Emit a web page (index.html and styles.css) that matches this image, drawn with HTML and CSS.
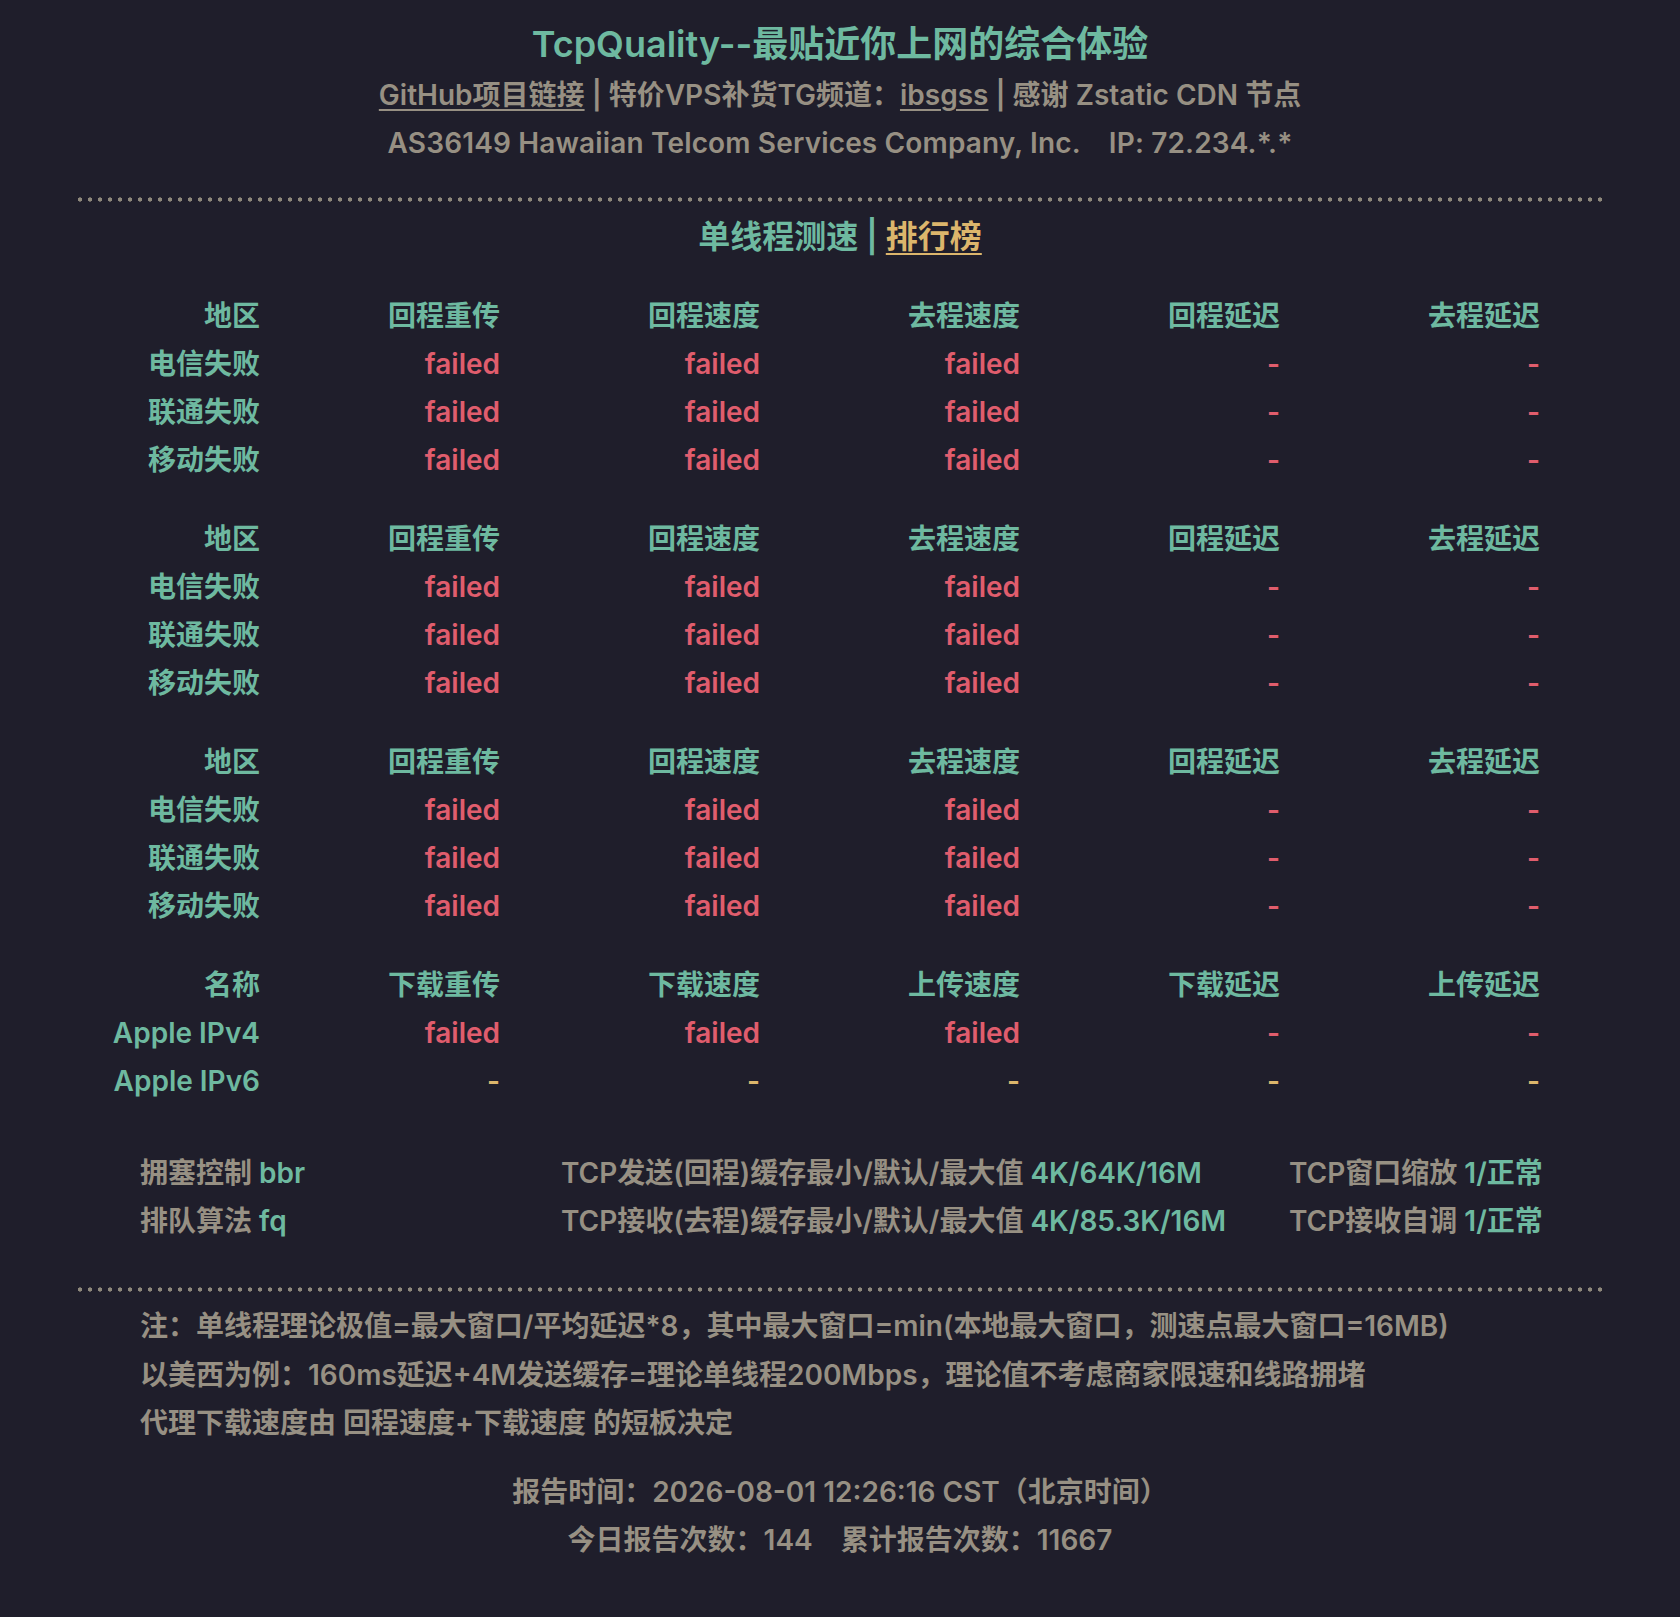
FILE: index.html
```html
<!DOCTYPE html>
<html lang="zh-CN">
<head>
<meta charset="utf-8">
<title>TcpQuality</title>
<link rel="stylesheet" href="styles.css">
</head>
<body>
<div class="wrap">
  <header class="head">
    <h1 class="title">TcpQuality--最贴近你上网的综合体验</h1>
    <p class="links"><a class="ul" href="#">GitHub项目链接</a> | 特价VPS补货TG频道：<a class="ul" href="#">ibsgss</a> | 感谢 Zstatic CDN 节点</p>
    <p class="asn">AS36149 Hawaiian Telcom Services Company, Inc.<span class="gap"></span>IP: 72.234.*.*</p>
  </header>

  <div class="dots"></div>

  <h2 class="section">单线程测速 <span class="bar">|</span> <a class="rank" href="#">排行榜</a></h2>

  <div class="tables">
    <div class="grid">
      <div class="th">地区</div><div class="th">回程重传</div><div class="th">回程速度</div><div class="th">去程速度</div><div class="th">回程延迟</div><div class="th">去程延迟</div>
      <div class="name">电信失败</div><div class="bad">failed</div><div class="bad">failed</div><div class="bad">failed</div><div class="bad">-</div><div class="bad">-</div>
      <div class="name">联通失败</div><div class="bad">failed</div><div class="bad">failed</div><div class="bad">failed</div><div class="bad">-</div><div class="bad">-</div>
      <div class="name">移动失败</div><div class="bad">failed</div><div class="bad">failed</div><div class="bad">failed</div><div class="bad">-</div><div class="bad">-</div>
    </div>
    <div class="grid">
      <div class="th">地区</div><div class="th">回程重传</div><div class="th">回程速度</div><div class="th">去程速度</div><div class="th">回程延迟</div><div class="th">去程延迟</div>
      <div class="name">电信失败</div><div class="bad">failed</div><div class="bad">failed</div><div class="bad">failed</div><div class="bad">-</div><div class="bad">-</div>
      <div class="name">联通失败</div><div class="bad">failed</div><div class="bad">failed</div><div class="bad">failed</div><div class="bad">-</div><div class="bad">-</div>
      <div class="name">移动失败</div><div class="bad">failed</div><div class="bad">failed</div><div class="bad">failed</div><div class="bad">-</div><div class="bad">-</div>
    </div>
    <div class="grid">
      <div class="th">地区</div><div class="th">回程重传</div><div class="th">回程速度</div><div class="th">去程速度</div><div class="th">回程延迟</div><div class="th">去程延迟</div>
      <div class="name">电信失败</div><div class="bad">failed</div><div class="bad">failed</div><div class="bad">failed</div><div class="bad">-</div><div class="bad">-</div>
      <div class="name">联通失败</div><div class="bad">failed</div><div class="bad">failed</div><div class="bad">failed</div><div class="bad">-</div><div class="bad">-</div>
      <div class="name">移动失败</div><div class="bad">failed</div><div class="bad">failed</div><div class="bad">failed</div><div class="bad">-</div><div class="bad">-</div>
    </div>
    <div class="grid">
      <div class="th">名称</div><div class="th">下载重传</div><div class="th">下载速度</div><div class="th">上传速度</div><div class="th">下载延迟</div><div class="th">上传延迟</div>
      <div class="name">Apple IPv4</div><div class="bad">failed</div><div class="bad">failed</div><div class="bad">failed</div><div class="bad">-</div><div class="bad">-</div>
      <div class="name">Apple IPv6</div><div class="na">-</div><div class="na">-</div><div class="na">-</div><div class="na">-</div><div class="na">-</div>
    </div>
  </div>

  <div class="sys">
    <div>拥塞控制 <span class="val">bbr</span></div>
    <div>TCP发送(回程)缓存最小/默认/最大值 <span class="val">4K/64K/16M</span></div>
    <div>TCP窗口缩放 <span class="val">1/正常</span></div>
    <div>排队算法 <span class="val">fq</span></div>
    <div>TCP接收(去程)缓存最小/默认/最大值 <span class="val">4K/85.3K/16M</span></div>
    <div>TCP接收自调 <span class="val">1/正常</span></div>
  </div>

  <div class="dots"></div>

  <div class="notes">
    <p>注：单线程理论极值=最大窗口/平均延迟*8，其中最大窗口=min(本地最大窗口，测速点最大窗口=16MB)</p>
    <p>以美西为例：160ms延迟+4M发送缓存=理论单线程200Mbps，理论值不考虑商家限速和线路拥堵</p>
    <p>代理下载速度由 回程速度+下载速度 的短板决定</p>
  </div>

  <div class="report">
    <p>报告时间：2026-08-01 12:26:16 CST（北京时间）</p>
    <p>今日报告次数：144<span class="gap2"></span>累计报告次数：11667</p>
  </div>
</div>
</body>
</html>
```

FILE: styles.css
```css
html, body {
  margin: 0;
  padding: 0;
  background: #1f1e2b;
}

body {
  font-family: Inter, "Noto Sans CJK SC", sans-serif;
  font-weight: 600;
  font-size: 28px;
  color: #979083;
  min-height: 1617px;
}

p { margin: 0; }

.wrap {
  width: 1524px;
  margin: 0 auto;
  padding-top: 18px;
}

.head { text-align: center; }

.title {
  margin: 0;
  font-size: 36px;
  line-height: 53px;
  font-weight: 600;
  color: #6eb9a0;
}

.links, .asn {
  line-height: 48px;
}

.asn { letter-spacing: 0.15px; }

.ul {
  color: #979083;
  text-decoration: underline;
  text-decoration-thickness: 2px;
  text-underline-offset: 4px;
}

.gap {
  display: inline-block;
  width: 28px;
}

.gap2 {
  display: inline-block;
  width: 28px;
}

.dots {
  height: 5px;
  margin-top: 30px;
  background-image: radial-gradient(circle at center, #8e887b 0, #8e887b 1.8px, transparent 2.5px);
  background-size: 10px 5px;
  background-position: -3px 0;
  background-repeat: repeat-x;
}

.section {
  margin: 11px 0 0;
  text-align: center;
  font-size: 32px;
  line-height: 48px;
  font-weight: 600;
  color: #6eb9a0;
}

.bar { color: #6eb9a0; }

.rank {
  color: #dcb66c;
  text-decoration: underline;
  text-decoration-thickness: 2px;
  text-underline-offset: 5px;
}

.tables { margin-top: 31px; }

.grid {
  display: grid;
  grid-template-columns: 182px 240px repeat(4, 260px);
  line-height: 48px;
  text-align: right;
}

.grid + .grid { margin-top: 31px; }

.th, .name { color: #6eb9a0; }
.bad { color: #e05d6d; }
.na { color: #dcb66c; }

.sys {
  margin-top: 44px;
  padding-left: 62px;
  display: grid;
  grid-template-columns: 421px 728px auto;
  line-height: 48px;
}

.val { color: #6eb9a0; }

.sys + .dots { margin-top: 42px; }

.notes {
  margin-top: 10px;
  padding-left: 62px;
  line-height: 48.5px;
}

.report {
  margin-top: 20px;
  text-align: center;
  line-height: 48.5px;
}
```
